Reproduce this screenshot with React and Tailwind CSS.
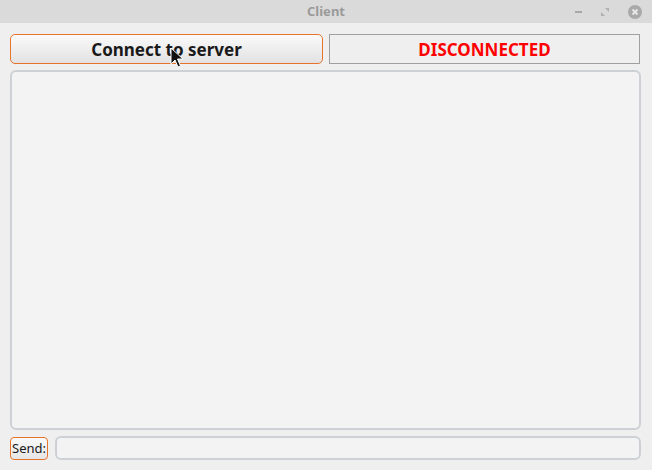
export default function App() {
  return (
    <div className="w-[652px] h-[470px] bg-[#efefef] flex flex-col font-['Noto_Sans',sans-serif] relative overflow-hidden">
      {/* title bar */}
      <div className="h-[24px] bg-[#dadada] flex items-center justify-center relative">
        <span className="text-[13px] font-bold text-[#9a9a9a]">Client</span>
        <div className="absolute right-[10px] top-0 h-[24px] flex items-center gap-[19px]">
          <div className="w-[7px] h-[2px] bg-[#a8a8a8]" />
          <svg width="8" height="8" viewBox="0 0 8 8">
            <path d="M4 0h4v4z M0 4l4 4H0z" fill="#b0b0b0" />
          </svg>
          <div className="w-[14px] h-[14px] rounded-full bg-[#a9a9a9] flex items-center justify-center">
            <svg width="8" height="8" viewBox="0 0 8 8">
              <path d="M1.5 1.5l5 5M6.5 1.5l-5 5" stroke="#e8e8e8" strokeWidth="1.8" />
            </svg>
          </div>
        </div>
      </div>

      <div className="flex-1 flex flex-col pl-[10px] pr-[11px] pt-[11px] pb-[10px]">
        <div className="flex gap-[6px] h-[30px]">
          <button className="w-[313px] h-[30px] rounded-[5px] border border-[#e8732a] bg-gradient-to-b from-[#fafafa] to-[#e2e2e2] text-[17px] font-bold text-[#1a1a1a] leading-none">
            Connect to server
          </button>
          <div className="flex-1 mr-[1px] h-[30px] border border-[#a0a0a0] bg-[#efefef] flex items-center justify-center text-[17px] font-bold text-[#ff0000] leading-none">
            DISCONNECTED
          </div>
        </div>

        <div className="mt-[6px] h-[360px] rounded-[6px] border-2 border-[#cdd1d5] bg-[#f3f3f3]" />

        <div className="mt-[6px] flex gap-[7px] items-center">
          <button className="w-[38px] h-[23px] rounded-[4px] border border-[#e8732a] bg-gradient-to-b from-[#fafafa] to-[#e6e6e6] text-[13px] text-[#1a1a1a] leading-none px-0">
            Send:
          </button>
          <div className="flex-1 h-[24px] rounded-[6px] border-2 border-[#cdd1d5] bg-[#f3f3f3]" />
        </div>
      </div>

      {/* mouse pointer */}
      <svg className="absolute left-[170px] top-[47px]" width="13" height="21" viewBox="0 0 13 21">
        <path d="M1 1v16l4-4 3 7 2.5-1-3-7h5.5z" fill="#111" stroke="#fff" strokeWidth="1" strokeLinejoin="round" />
      </svg>
    </div>
  )
}
